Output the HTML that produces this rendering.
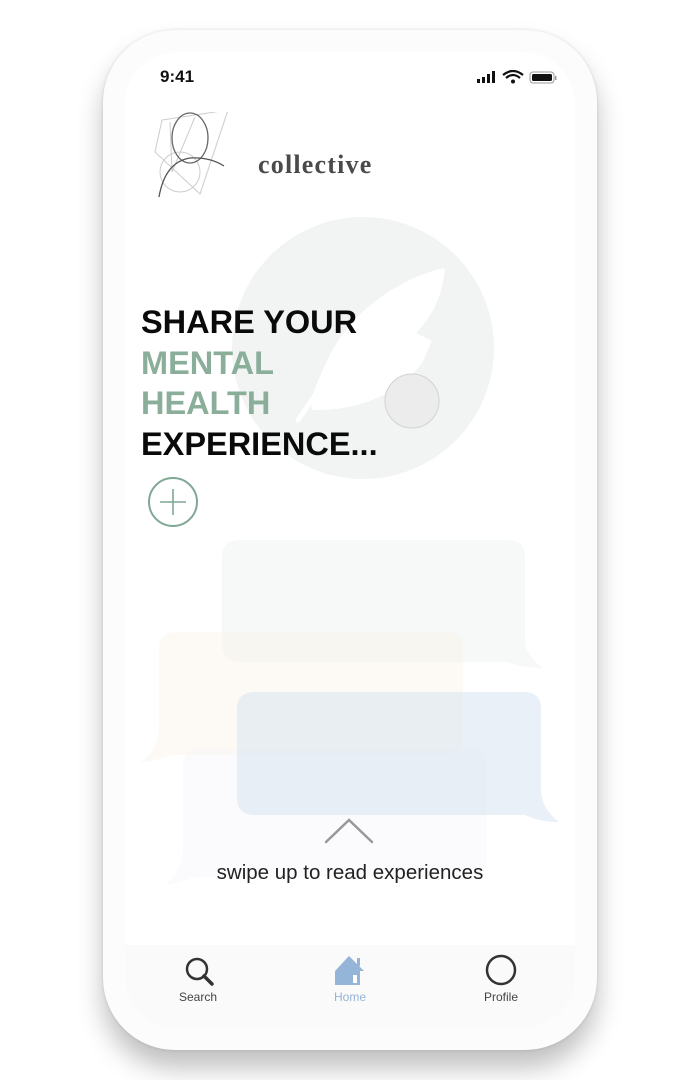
<!DOCTYPE html>
<html><head><style>
*{margin:0;padding:0;box-sizing:border-box}
body{width:700px;height:1080px;background:#fff;position:relative;overflow:hidden;font-family:"Liberation Sans",sans-serif}
.phone{position:absolute;left:103px;top:30px;width:494px;height:1020px;border-radius:72px;background:#fcfcfc;box-shadow:0 18px 26px rgba(0,0,0,.25),0 0 3px rgba(0,0,0,.12)}
.screen{position:absolute;left:125px;top:52px;width:450px;height:976px;border-radius:52px;background:#fff;overflow:hidden}
.abs{position:absolute}
.h{position:absolute;left:141px;top:302px;font-weight:bold;font-size:32.5px;line-height:40.5px;color:#0a0a0a;letter-spacing:0px}
.g{color:#8aae9a}
</style></head><body>
<div class="phone"></div>
<div class="screen">
 <div class="abs" style="left:0;top:893px;width:450px;height:83px;background:#fafafa"></div>
</div>
<div class="abs" style="left:160px;top:67px;font-size:17px;font-weight:bold;color:#111">9:41</div>
<svg class="abs" style="left:477px;top:70px" width="84" height="16" viewBox="0 0 84 16">
<rect x="0" y="9" width="3" height="4" fill="#111"/><rect x="5" y="7" width="3" height="6" fill="#111"/><rect x="10" y="4" width="3" height="9" fill="#111"/><rect x="15" y="1" width="3" height="12" fill="#111"/>
<path d="M26 5 Q36 -3 46 5" stroke="#111" stroke-width="2.2" fill="none"/><path d="M29 8 Q36 2 43 8" stroke="#111" stroke-width="2.2" fill="none"/><circle cx="36" cy="11.5" r="2" fill="#111"/>
<rect x="53" y="2" width="24" height="11" rx="3" fill="none" stroke="#999" stroke-width="1"/><rect x="55" y="4" width="20" height="7" rx="1.5" fill="#111"/><rect x="78" y="6" width="1.5" height="4" fill="#999"/>
</svg>
<svg class="abs" style="left:150px;top:112px" width="85" height="100" viewBox="0 0 85 100">
<g fill="none" stroke="#ccc" stroke-width="1"><polygon points="12,8 78,-2 50,82 5,40"/><circle cx="30" cy="60" r="20"/><polyline points="20,10 22,60 45,5"/></g>
<ellipse cx="40" cy="26" rx="18" ry="25" fill="none" stroke="#666" stroke-width="1.3"/>
<path d="M9 85 Q15 50 40 46 Q60 45 74 54" fill="none" stroke="#555" stroke-width="1.3"/>
</svg>
<div class="abs" style="left:258px;top:150px;font-family:'Liberation Serif',serif;font-weight:bold;font-size:26px;letter-spacing:1.2px;color:#4a4a4a">collective</div>
<svg class="abs" style="left:230px;top:215px" width="270" height="270" viewBox="0 0 270 270">
<circle cx="133" cy="133" r="131" fill="#f1f4f3"/>
<path d="M215 53 C195 56 130 80 100 140 C85 170 80 185 82 195 C130 196 170 178 192 148 L202 126 L186 118 C203 100 212 82 215 53Z" fill="#fff"/>
<path d="M118 132 L68 205" stroke="#fff" stroke-width="5" stroke-linecap="round"/>
<circle cx="182" cy="186" r="27" fill="#ececec" stroke="#d2d2d2" stroke-width="1"/>
</svg>
<div class="h">SHARE YOUR<br><span class="g">MENTAL<br>HEALTH</span><br>EXPERIENCE...</div>
<svg class="abs" style="left:147px;top:477px" width="52" height="52"><circle cx="26" cy="25" r="24" fill="none" stroke="#7fa794" stroke-width="2"/><path d="M26 12V38M13 25H39" stroke="#7fa794" stroke-width="1.6"/></svg>
<svg class="abs" style="left:0;top:0" width="700" height="1080">
<g opacity="0.4"><path d="M240 540H508Q525 540 525 557V640Q525 655 543 668Q520 668 508 662H240Q222 662 222 645V557Q222 540 240 540Z" fill="#e9efea"/></g>
<g opacity="0.4"><path d="M177 632H446Q463 632 463 649V738Q463 755 446 755H172Q158 760 140 763Q158 750 159 730V649Q159 632 177 632Z" fill="#fbf3e8"/></g>
<g opacity="0.35"><path d="M201 749H470Q487 749 487 766V860Q487 877 470 877H195Q180 882 165 885Q182 870 183 850V766Q183 749 201 749Z" fill="#f3f0f8"/></g>
<g opacity="0.5"><path d="M255 692H524Q541 692 541 709V790Q541 808 559 822Q540 822 525 815H255Q237 815 237 798V709Q237 692 255 692Z" fill="#d6e1ef"/></g>
<path d="M326 842L349 820L372 842" fill="none" stroke="#999" stroke-width="2.5" stroke-linecap="round"/>
<text x="350" y="879" text-anchor="middle" font-family="Liberation Sans,sans-serif" font-size="20.5" fill="#222">swipe up to read experiences</text>
<circle cx="197" cy="969" r="10" fill="none" stroke="#333" stroke-width="2.5"/><path d="M204 976L212 984" stroke="#333" stroke-width="3.5" stroke-linecap="round"/>
<path d="M335 971L349 956L364 971H360V985H335Z" fill="#94b4d8"/><rect x="353" y="975" width="4" height="8" fill="#fff"/><rect x="357" y="958" width="3" height="8" fill="#94b4d8"/>
<circle cx="501" cy="970" r="14" fill="none" stroke="#333" stroke-width="2.5"/>
<g font-family="Liberation Sans,sans-serif" font-size="12" text-anchor="middle"><text x="198" y="1001" fill="#444">Search</text><text x="350" y="1001" fill="#94b4d8">Home</text><text x="501" y="1001" fill="#444">Profile</text></g>
</svg>
</body></html>
